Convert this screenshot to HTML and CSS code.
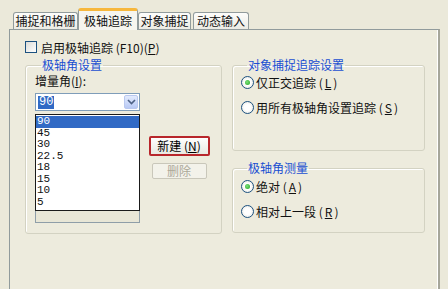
FILE: index.html
```html
<!DOCTYPE html>
<html lang="zh-CN">
<head>
    <meta charset="UTF-8">
    <meta name="viewport" content="width=device-width, initial-scale=1.0">
    <title>草图设置</title>
    <link rel="stylesheet" href="styles.css">
</head>
<body>
    <div class="tabs">
        <div class="tab first">捕捉和格栅</div>
        <div class="tab active">极轴追踪</div>
        <div class="tab third">对象捕捉</div>
        <div class="tab last">动态输入</div>
    </div>

    <div class="panel">
        <div class="check-row">
            <span class="checkbox"></span>
            <span>启用极轴追踪 (F10)(<u>P</u>)</span>
        </div>

        <div class="columns">
            <fieldset class="group left-group">
                <legend>极轴角设置</legend>
                <div class="label">增量角(<u>I</u>):</div>
                <div class="combo">
                    <span class="combo-value">90</span>
                    <span class="combo-arrow">
                        <svg width="9" height="6" viewBox="0 0 9 6"><path d="M1 1 L4.5 4.5 L8 1" fill="none" stroke="#4d6185" stroke-width="1.6"/></svg>
                    </span>
                </div>
                <div class="list-row">
                    <div class="listbox">
                        <div class="dropdown">
                            <div class="item selected">90</div>
                            <div class="item">45</div>
                            <div class="item">30</div>
                            <div class="item">22.5</div>
                            <div class="item">18</div>
                            <div class="item">15</div>
                            <div class="item">10</div>
                            <div class="item">5</div>
                        </div>
                    </div>
                    <div class="buttons">
                        <button class="btn new">新建 (<u>N</u>)</button>
                        <button class="btn del" disabled>删除</button>
                    </div>
                </div>
            </fieldset>

            <div class="right-col">
                <fieldset class="group track-group">
                    <legend>对象捕捉追踪设置</legend>
                    <div class="radio-row"><span class="radio on"></span>仅正交追踪 (<u>L</u>)</div>
                    <div class="radio-row"><span class="radio"></span>用所有极轴角设置追踪 (<u>S</u>)</div>
                </fieldset>
                <fieldset class="group measure-group">
                    <legend>极轴角测量</legend>
                    <div class="radio-row"><span class="radio on"></span>绝对 (<u>A</u>)</div>
                    <div class="radio-row"><span class="radio"></span>相对上一段 (<u>R</u>)</div>
                </fieldset>
            </div>
        </div>
    </div>
</body>
</html>
```

FILE: styles.css
```css
body {
    margin: 0;
    background-color: #ebe9da;
    font-family: "Noto Sans CJK SC", "Liberation Sans", sans-serif;
    font-size: 12px;
    color: #111;
    width: 448px;
    height: 289px;
    overflow: hidden;
}
u {
    text-decoration: underline;
}
.tabs {
    display: flex;
    align-items: flex-end;
    padding-left: 13px;
    height: 29px;
}
.tab {
    height: 16px;
    line-height: 16px;
    padding: 0;
    text-align: center;
    white-space: nowrap;
    border: 1px solid #919b9c;
    border-bottom: none;
    border-radius: 3px 3px 0 0;
    background: linear-gradient(#fdfdfb, #ecebe4);
}
.tab.first {
    width: 63px;
}
.tab.active {
    height: 19px;
    line-height: 19px;
    width: 58px;
    border-top: 3px solid #f7b73c;
    background: #f6f5ef;
    position: relative;
    top: 1px;
    z-index: 1;
}
.tab.third {
    width: 51px;
}
.tab.last {
    margin-left: 2px;
    width: 54px;
}
.panel {
    margin-left: 9px;
    width: 431px;
    height: 270px;
    border: 1px solid #919b9c;
    border-right: 2px solid #a6a69a;
    box-shadow: inset -1px 0 0 #fff;
    background-color: #edebdd;
    padding: 11px 0 0 15px;
    box-sizing: border-box;
}
.check-row {
    display: flex;
    align-items: center;
    height: 12px;
    gap: 4px;
}
.checkbox {
    width: 10px;
    height: 10px;
    border: 1px solid #1c5180;
    background: linear-gradient(135deg, #dcdcd7, #fff);
}
.columns {
    display: flex;
    gap: 10px;
    margin-top: 5px;
}
.group {
    margin: 0;
    border: 1px solid #d3d2c2;
    border-radius: 3px;
    padding: 0;
    box-shadow: 1px 1px 0 #fff inset;
}
.group legend {
    color: #1a4fd2;
    padding: 0 1px;
    margin-left: 6px;
    line-height: 14px;
}
.left-group {
    width: 197px;
    height: 176px;
    box-sizing: border-box;
    padding: 2px 0 0 9px;
}
.label {
    line-height: 14px;
}
.combo {
    margin-top: 5px;
    width: 105px;
    height: 18px;
    box-sizing: border-box;
    border: 1px solid #7f9db9;
    background: #fff;
    display: flex;
    align-items: center;
    justify-content: space-between;
    padding: 1px;
}
.combo-value {
    background-color: #316ac5;
    color: #fff;
    font-family: "Liberation Mono", monospace;
    line-height: 13px;
    padding: 0 1px;
    margin-left: 1px;
}
.combo-arrow {
    width: 14px;
    height: 14px;
    box-sizing: border-box;
    border: 1px solid #b9c8ef;
    border-radius: 2px;
    background: linear-gradient(#e3ebfd, #b8c9f5);
    display: flex;
    align-items: center;
    justify-content: center;
}
.list-row {
    display: flex;
    margin-top: 3px;
}
.listbox {
    width: 105px;
    height: 109px;
    box-sizing: border-box;
    border: 1px solid #8f9ea8;
    background-color: #e8e6d6;
}
.dropdown {
    margin: -1px;
    height: 94px;
    border: 1px solid #1a1a1a;
    background: #fff;
    padding-top: 1px;
}
.item {
    height: 11.5px;
    line-height: 11.5px;
    padding-left: 1px;
    font-family: "Liberation Mono", monospace;
    font-size: 11px;
}
.item.selected {
    background-color: #316ac5;
    color: #fff;
}
.buttons {
    display: flex;
    flex-direction: column;
    align-items: center;
    margin-left: 8px;
    margin-top: 22px;
    width: 62px;
}
.btn {
    font-family: "Noto Sans CJK SC", sans-serif;
    font-size: 12px;
    padding: 0;
    border-radius: 2px;
    background: linear-gradient(#fefefe, #e9e8e1);
}
.btn.new {
    width: 61px;
    height: 20px;
    border: 2px solid #b8262b;
    color: #000;
    line-height: 14px;
}
.btn.del {
    width: 55px;
    height: 16px;
    margin-top: 7px;
    border: 1px solid #c9c7ba;
    color: #aca899;
    line-height: 14px;
    background: #f3f2ea;
}
.right-col {
    display: flex;
    flex-direction: column;
    gap: 10px;
}
.track-group {
    width: 193px;
    height: 93px;
    box-sizing: border-box;
    padding: 3px 0 0 8px;
}
.measure-group {
    width: 193px;
    height: 72px;
    box-sizing: border-box;
    padding: 4px 0 0 8px;
}
.radio-row {
    display: flex;
    align-items: center;
    gap: 2px;
    height: 14px;
    margin-bottom: 11px;
}
.radio {
    width: 11px;
    height: 11px;
    border: 1px solid #1c5180;
    border-radius: 50%;
    background: radial-gradient(circle, #fff 40%, #e0e0d8);
    display: flex;
    align-items: center;
    justify-content: center;
}
.radio.on::after {
    content: "";
    width: 5px;
    height: 5px;
    border-radius: 50%;
    background: radial-gradient(circle at 40% 40%, #7ce27c, #21a121);
}
```
